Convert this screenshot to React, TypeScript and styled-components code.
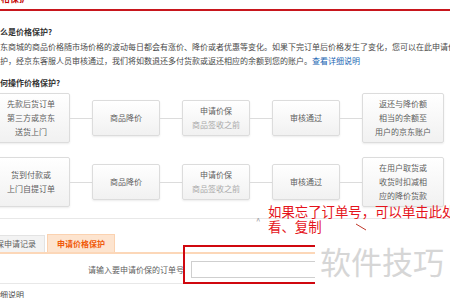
import React from "react";
import styled, { createGlobalStyle } from "styled-components";

const GlobalStyle = createGlobalStyle`
  html, body {
    margin: 0;
    padding: 0;
    background: #fff;
  }
  body {
    font-family: "Noto Sans CJK SC", "Noto Sans", sans-serif;
  }
`;

const Page = styled.div`
  position: relative;
  width: 450px;
  height: 298px;
  overflow: hidden;
  background: #fff;
`;

const Content = styled.div`
  display: flex;
  flex-direction: column;
  margin-left: -8px;
  width: 470px;
`;

const Title = styled.div`
  margin-top: -6px;
  height: 9px;
  font-size: 9px;
  line-height: 9px;
  font-weight: bold;
  color: #c40000;
  white-space: nowrap;
`;

const RedRule = styled.div`
  margin-top: 6px;
  height: 2px;
  background: #c8161d;
`;

const Heading = styled.div<{ $top: number }>`
  margin-top: ${p => p.$top}px;
  font-size: 8px;
  line-height: 14px;
  font-weight: bold;
  color: #333;
  white-space: nowrap;
`;

const Para = styled.div`
  margin-top: 1px;
  font-size: 8px;
  line-height: 14px;
  color: #4a4a4a;
  white-space: nowrap;
`;

const More = styled.a`
  color: #1a66b3;
  text-decoration: none;
`;

const Flow = styled.div`
  margin-top: 3px;
  display: flex;
  flex-direction: column;
  gap: 14px;
`;

const FlowRow = styled.div`
  display: flex;
  align-items: center;
  height: 50px;
`;

const Step = styled.div<{ $w: number; $tall?: boolean }>`
  box-sizing: border-box;
  flex: none;
  width: ${p => p.$w}px;
  height: ${p => (p.$tall ? 50 : 36)}px;
  display: flex;
  flex-direction: column;
  align-items: center;
  justify-content: center;
  border: 1px solid #dcdcdc;
  border-radius: 2px;
  background: linear-gradient(#ffffff, #f1f1f1);
  box-shadow: 0 1px 2px rgba(0, 0, 0, 0.08);
  font-size: 8px;
  line-height: 14px;
  color: #5e5e5e;
  white-space: nowrap;
`;

const Hint = styled.span`
  color: #aaa;
`;

const Joint = styled.div`
  flex: none;
  width: 22px;
  height: 1px;
  background: #dcdcdc;
`;

const GreyRule = styled.div`
  margin-top: 11px;
  height: 1px;
  background: #e8e8e8;
`;

const Tabs = styled.div`
  margin-top: 15px;
  margin-left: -13px;
  display: flex;
  align-items: flex-end;
  gap: 2px;
  height: 18px;
  border-bottom: 2px solid #fcd7b8;
`;

const Tab = styled.div<{ $active?: boolean }>`
  box-sizing: border-box;
  height: ${p => (p.$active ? 18 : 17)}px;
  padding: 0 ${p => (p.$active ? 9 : 8)}px;
  font-size: 8px;
  line-height: ${p => (p.$active ? 17 : 16)}px;
  font-weight: ${p => (p.$active ? "bold" : "normal")};
  color: ${p => (p.$active ? "#f05a0a" : "#5e5e5e")};
  background: ${p => (p.$active ? "#fde4cf" : "#f3f3f3")};
  border: 1px solid ${p => (p.$active ? "#fbd2b0" : "#e3e3e3")};
  border-bottom: none;
  white-space: nowrap;
`;

const Form = styled.div`
  display: flex;
  align-items: center;
  gap: 7px;
  padding: 7px 0 5px 96px;
  border-bottom: 1px solid #e8e8e8;
`;

const Label = styled.label`
  font-size: 8px;
  line-height: 17px;
  color: #5e5e5e;
  white-space: nowrap;
`;

const Field = styled.input`
  box-sizing: border-box;
  width: 150px;
  height: 17px;
  margin: 0;
  padding: 0 3px;
  border: 1px solid #cfcfcf;
  background: #fff;
  outline: none;
`;

const Foot = styled.div`
  margin-top: 5px;
  font-size: 8px;
  line-height: 12px;
  color: #4a4a4a;
  white-space: nowrap;
`;

const Frame = styled.div`
  position: absolute;
  left: 183px;
  top: 245px;
  width: 150px;
  height: 39px;
  box-sizing: border-box;
  border: 2px solid #d0080f;
`;

const Note = styled.div`
  position: absolute;
  left: 268px;
  top: 204px;
  font-size: 13.4px;
  line-height: 15px;
  color: #e5141c;
  white-space: nowrap;
`;

const Caret = styled.span`
  position: absolute;
  left: 256px;
  top: 217px;
  font-size: 8px;
  line-height: 8px;
  color: #999;
`;

const Tick = styled.svg`
  position: absolute;
  left: 355px;
  top: 223px;
`;

const Stamp = styled.div`
  position: absolute;
  left: 315px;
  top: 237px;
  width: 135px;
  height: 61px;
  box-sizing: border-box;
  padding: 8px 0 0 5px;
  background: #fff;
  font-size: 31px;
  line-height: 31px;
  color: #d6d6d6;
  white-space: nowrap;
`;

type StepData = { w: number; tall?: boolean; lines: string[]; hint?: string };

const steps1: StepData[] = [
  { w: 78, tall: true, lines: ["先款后货订单", "第三方或京东", "送货上门"] },
  { w: 68, lines: ["商品降价"] },
  { w: 68, lines: ["申请价保"], hint: "商品签收之前" },
  { w: 68, lines: ["审核通过"] },
  { w: 82, tall: true, lines: ["返还与降价额", "相当的余额至", "用户的京东账户"] },
];

const steps2: StepData[] = [
  { w: 78, tall: true, lines: ["货到付款或", "上门自提订单"] },
  { w: 68, lines: ["商品降价"] },
  { w: 68, lines: ["申请价保"], hint: "商品签收之前" },
  { w: 68, lines: ["审核通过"] },
  { w: 82, tall: true, lines: ["在用户取货或", "收货时扣减相", "应的降价货款"] },
];

function Row({ steps }: { steps: StepData[] }) {
  return (
    <FlowRow>
      {steps.map((s, i) => (
        <React.Fragment key={i}>
          {i > 0 && <Joint />}
          <Step $w={s.w} $tall={s.tall}>
            {s.lines.map(l => (
              <span key={l}>{l}</span>
            ))}
            {s.hint && <Hint>{s.hint}</Hint>}
          </Step>
        </React.Fragment>
      ))}
    </FlowRow>
  );
}

export default function App() {
  return (
    <Page>
      <GlobalStyle />
      <Content>
        <Title>价格保护</Title>
        <RedRule />
        <Heading $top={14}>什么是价格保护?</Heading>
        <Para>
          京东商城的商品价格随市场价格的波动每日都会有涨价、降价或者优惠等变化。如果下完订单后价格发生了变化，您可以在此申请价格
          <br />
          保护，经京东客服人员审核通过，我们将如数退还多付货款或返还相应的余额到您的账户。<More>查看详细说明</More>
        </Para>
        <Heading $top={8}>如何操作价格保护?</Heading>
        <Flow>
          <Row steps={steps1} />
          <Row steps={steps2} />
        </Flow>
        <GreyRule />
        <Tabs>
          <Tab>价保申请记录</Tab>
          <Tab $active>申请价格保护</Tab>
        </Tabs>
        <Form>
          <Label>请输入要申请价保的订单号</Label>
          <Field />
        </Form>
        <Foot>详细说明</Foot>
      </Content>
      <Frame />
      <Note>
        如果忘了订单号，可以单击此处查
        <br />
        看、复制
      </Note>
      <Caret>^</Caret>
      <Tick width="12" height="8" viewBox="0 0 12 8">
        <path d="M1 1 L11 7" stroke="#c0392b" strokeWidth="1" fill="none" />
      </Tick>
      <Stamp>软件技巧</Stamp>
    </Page>
  );
}
